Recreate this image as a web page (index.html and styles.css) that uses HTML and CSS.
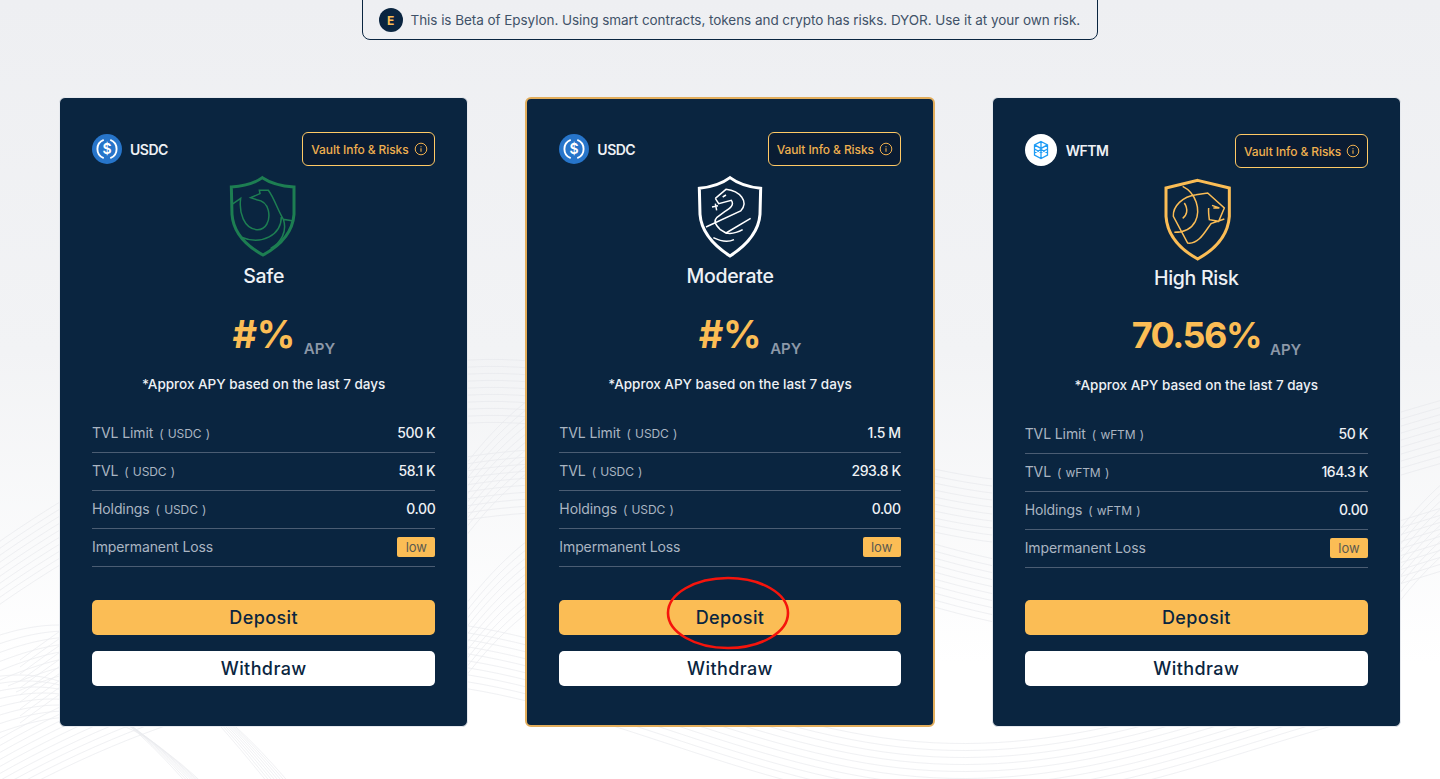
FILE: index.html
```html
<!DOCTYPE html>
<html lang="en">
<head>
<meta charset="utf-8">
<title>Epsylon Vaults</title>
<link rel="stylesheet" href="styles.css">
</head>
<body>
<svg class="waves" viewBox="0 0 1440 779" aria-hidden="true">
  <defs>
    <path id="wa" d="M-40 240 C 120 120 300 40 470 30 C 640 20 820 130 1000 150 C 1180 170 1320 100 1480 60"/>
    <path id="wb" d="M-40 60 C 30 30 90 20 150 70 C 230 130 280 220 330 260"/>
    <path id="wc" d="M440 120 C 480 60 520 20 560 0"/>
    <g id="set"><use href="#wa"/><use href="#wa" y="7"/><use href="#wa" y="14"/><use href="#wa" y="21"/><use href="#wa" y="28"/><use href="#wa" y="35"/><use href="#wa" y="42"/><use href="#wa" y="49"/><use href="#wa" y="56"/><use href="#wa" y="63"/></g>
    <g id="setb"><use href="#wb"/><use href="#wb" x="8" y="6"/><use href="#wb" x="16" y="12"/><use href="#wb" x="24" y="18"/><use href="#wb" x="32" y="24"/><use href="#wb" x="40" y="30"/><use href="#wb" x="48" y="36"/><use href="#wb" x="56" y="42"/></g>
    <g id="setc"><use href="#wc"/><use href="#wc" y="8"/><use href="#wc" y="16"/><use href="#wc" y="24"/><use href="#wc" y="32"/><use href="#wc" y="40"/><use href="#wc" y="48"/><use href="#wc" y="56"/><use href="#wc" y="64"/><use href="#wc" y="72"/></g>
  </defs>
  <use href="#set" y="330"/>
  <use href="#set" y="420" x="60"/>
  <use href="#set" y="590" x="-100"/>
  <use href="#setb" y="590"/>
  <use href="#setb" y="640" x="-40"/>
  <use href="#setc" y="380"/>
  <use href="#setc" y="520"/>
  <use href="#setc" y="450" x="930"/>
</svg>

<div class="banner-row">
  <div class="banner">
    <span class="banner-badge">E</span>
    <span>This is Beta of Epsylon. Using smart contracts, tokens and crypto has risks. DYOR. Use it at your own risk.</span>
  </div>
</div>

<main class="vaults">

  <article class="card">
    <header class="head">
      <div class="token">
        <svg class="token-icon" viewBox="0 0 32 32"><circle cx="16" cy="16" r="16" fill="#2775ca"/><path d="M12.500 6.200a10.500 10.500 0 0 0 0 19.600M19.500 6.200a10.500 10.500 0 0 1 0 19.600" fill="none" stroke="#fff" stroke-width="2"/><text x="16" y="21.500" text-anchor="middle" class="dollar">$</text></svg>
        <span class="token-name">USDC</span>
      </div>
      <button class="info-btn">Vault Info &amp; Risks
        <svg class="info-icon" viewBox="0 0 14 14"><circle cx="7" cy="7" r="5.800" fill="none" stroke="currentColor" stroke-width="1"/><path d="M7 6.300v3.400M7 4.200v1" stroke="currentColor" stroke-width="1.100"/></svg>
      </button>
    </header>
    <svg class="shield shield-safe" viewBox="0 0 240 270">
      <path class="outer" d="M115 20C95 35 62 45 22 48L24 130C28 185 68 225 117 252C166 225 206 185 210 130L210 48C170 45 137 35 115 20Z"/>
      <path class="inner" d="M24 100L50 82C44 125 60 172 98 176C125 178 140 150 133 118C128 98 115 88 98 86L80 80L108 68L106 58L133 58C150 80 160 115 178 145L208 150M50 198C115 225 172 190 172 138M178 145C190 180 172 215 140 232"/>
    </svg>
    <h2 class="level">Safe</h2>
    <div class="apy"><span></span><strong class="apy-value">#%</strong><span class="apy-label">APY</span></div>
    <p class="approx">*Approx APY based on the last 7 days</p>
    <dl class="stats">
      <div class="stat"><dt>TVL Limit<small>( USDC )</small></dt><dd>500 K</dd></div>
      <div class="stat"><dt>TVL<small>( USDC )</small></dt><dd>58.1 K</dd></div>
      <div class="stat"><dt>Holdings<small>( USDC )</small></dt><dd>0.00</dd></div>
      <div class="stat"><dt>Impermanent Loss</dt><dd class="pill">low</dd></div>
    </dl>
    <div class="actions">
      <button class="btn btn-deposit">Deposit</button>
      <button class="btn btn-withdraw">Withdraw</button>
    </div>
  </article>

  <article class="card card-active">
    <header class="head">
      <div class="token">
        <svg class="token-icon" viewBox="0 0 32 32"><circle cx="16" cy="16" r="16" fill="#2775ca"/><path d="M12.500 6.200a10.500 10.500 0 0 0 0 19.600M19.500 6.200a10.500 10.500 0 0 1 0 19.600" fill="none" stroke="#fff" stroke-width="2"/><text x="16" y="21.500" text-anchor="middle" class="dollar">$</text></svg>
        <span class="token-name">USDC</span>
      </div>
      <button class="info-btn">Vault Info &amp; Risks
        <svg class="info-icon" viewBox="0 0 14 14"><circle cx="7" cy="7" r="5.800" fill="none" stroke="currentColor" stroke-width="1"/><path d="M7 6.300v3.400M7 4.200v1" stroke="currentColor" stroke-width="1.100"/></svg>
      </button>
    </header>
    <svg class="shield shield-moderate" viewBox="0 0 240 270">
      <path class="outer" d="M120 20C100 35 68 48 28 52L30 130C34 185 74 225 120 255C166 225 206 185 210 130L212 52C172 48 140 35 120 20Z"/>
      <path class="inner" d="M76 82L108 55C150 60 178 92 152 120L48 168M76 82L86 98L124 88C134 102 120 112 104 122L80 140C70 150 76 160 90 175L108 186L182 142M84 104L66 108M76 98L80 118M98 78L108 72M108 186C128 190 140 186 158 176M70 200C90 210 115 214 132 206"/>
    </svg>
    <h2 class="level">Moderate</h2>
    <div class="apy"><span></span><strong class="apy-value">#%</strong><span class="apy-label">APY</span></div>
    <p class="approx">*Approx APY based on the last 7 days</p>
    <dl class="stats">
      <div class="stat"><dt>TVL Limit<small>( USDC )</small></dt><dd>1.5 M</dd></div>
      <div class="stat"><dt>TVL<small>( USDC )</small></dt><dd>293.8 K</dd></div>
      <div class="stat"><dt>Holdings<small>( USDC )</small></dt><dd>0.00</dd></div>
      <div class="stat"><dt>Impermanent Loss</dt><dd class="pill">low</dd></div>
    </dl>
    <div class="actions">
      <button class="btn btn-deposit">Deposit</button>
      <button class="btn btn-withdraw">Withdraw</button>
    </div>
    <svg class="annotation" viewBox="0 0 124 74"><ellipse cx="62" cy="37" rx="60" ry="35" fill="none" stroke="#f5140c" stroke-width="2.600"/></svg>
  </article>

  <article class="card card-high">
    <header class="head">
      <div class="token">
        <svg class="token-icon" viewBox="0 0 32 32"><circle cx="16" cy="16" r="16" fill="#fff"/><path d="M16 7.500l6.500 3.400v10.200L16 24.500l-6.500-3.400V10.900ZM9.500 10.900l6.500 3.500 6.500-3.500M16 7.500v17M9.500 15l6.500 3.500 6.500-3.500M9.500 19l6.500-3.500 6.500 3.500" fill="none" stroke="#1d9bf5" stroke-width="1.300"/></svg>
        <span class="token-name">WFTM</span>
      </div>
      <button class="info-btn">Vault Info &amp; Risks
        <svg class="info-icon" viewBox="0 0 14 14"><circle cx="7" cy="7" r="5.800" fill="none" stroke="currentColor" stroke-width="1"/><path d="M7 6.300v3.400M7 4.200v1" stroke="currentColor" stroke-width="1.100"/></svg>
      </button>
    </header>
    <svg class="shield shield-high" viewBox="0 0 240 270">
      <path class="outer" d="M125 22L220 45L220 130C216 190 175 230 125 258C75 230 34 190 30 130L30 45Z"/>
      <path class="inner" d="M80 40C120 60 135 110 118 145C105 170 80 178 55 178M120 65L155 60L205 105L188 145L160 140C158 125 157 115 158 105M120 65C80 70 50 100 52 130L95 210C130 215 150 170 165 152L205 138M85 90C98 110 92 128 80 136M168 97L190 105L172 105"/>
    </svg>
    <h2 class="level">High Risk</h2>
    <div class="apy"><span></span><strong class="apy-value">70.56%</strong><span class="apy-label">APY</span></div>
    <p class="approx">*Approx APY based on the last 7 days</p>
    <dl class="stats">
      <div class="stat"><dt>TVL Limit<small>( wFTM )</small></dt><dd>50 K</dd></div>
      <div class="stat"><dt>TVL<small>( wFTM )</small></dt><dd>164.3 K</dd></div>
      <div class="stat"><dt>Holdings<small>( wFTM )</small></dt><dd>0.00</dd></div>
      <div class="stat"><dt>Impermanent Loss</dt><dd class="pill">low</dd></div>
    </dl>
    <div class="actions">
      <button class="btn btn-deposit">Deposit</button>
      <button class="btn btn-withdraw">Withdraw</button>
    </div>
  </article>

</main>
</body>
</html>
```
FILE: styles.css
```css
* { box-sizing: border-box; }
html, body { margin: 0; height: 100%; }
body {
  position: relative;
  overflow: hidden;
  font-family: Inter, "Liberation Sans", sans-serif;
  background: linear-gradient(#eeeff2 0, #f2f3f5 45%, #ffffff 85%);
  color: #fff;
}
.waves {
  position: absolute;
  inset: 0;
  width: 1440px;
  height: 779px;
  fill: none;
  stroke: #e5e7eb;
  stroke-width: 0.7;
  opacity: 0.8;
}
.banner-row { position: relative; display: flex; justify-content: center; height: 40px; padding-left: 19px; }
.banner {
  width: 736px;
  display: flex;
  align-items: center;
  gap: 8px;
  margin-top: -10px;
  height: 50px;
  padding: 10px 16px 0;
  border: 1px solid #0a2540;
  border-radius: 8px;
  color: #3f5268;
  font-size: 13.5px;
  letter-spacing: -0.05px;
  white-space: nowrap;
}
.banner-badge {
  width: 24px;
  height: 24px;
  flex: none;
  border-radius: 50%;
  background: #0a2540;
  color: #fbbd55;
  font-size: 12px;
  font-weight: 700;
  display: flex;
  align-items: center;
  justify-content: center;
}
.vaults {
  position: relative;
  display: grid;
  grid-template-columns: repeat(3, 1fr);
  gap: 57px;
  padding: 57px 39px 0 59px;
}
.card {
  position: relative;
  height: 630px;
  padding: 34px 32px 0;
  background: #0a2540;
  border: 1px solid #e6e9ee;
  border-radius: 6px;
}
.card-active { border: 2px solid #e3ae5c; padding: 33px 32px 0; }
.card-high { padding-top: 36px; }
.head { display: flex; justify-content: space-between; align-items: center; height: 34px; }
.token { display: flex; align-items: center; gap: 8px; }
.card-high .token { margin-top: -2px; gap: 9px; }
.token-icon { width: 30px; height: 30px; display: block; }
.card-high .token-icon { width: 32px; height: 32px; }
.dollar { fill: #fff; font-family: Inter, sans-serif; font-size: 15px; font-weight: 600; }
.token-name { font-size: 14px; font-weight: 600; letter-spacing: -0.5px; color: #eef1f5; }
.info-btn {
  display: flex;
  align-items: center;
  gap: 5px;
  width: 133px;
  height: 34px;
  padding: 0 8px;
  background: #0a1c33;
  border: 1px solid #ffc965;
  border-radius: 6px;
  color: #f0b04f;
  font: 500 12px Inter, sans-serif;
  letter-spacing: -0.1px;
  white-space: nowrap;
}
.info-icon { width: 14px; height: 14px; flex: none; }
.shield { display: block; width: 80px; height: 90px; margin: 5px auto 0; fill: none; }
.shield .outer { stroke-width: 9; stroke-linejoin: miter; }
.shield .inner { stroke-width: 4.5; }
.shield-safe .outer, .shield-safe .inner { stroke: #1d7e52; }
.shield-moderate .outer, .shield-moderate .inner { stroke: #fff; }
.shield-high .outer, .shield-high .inner { stroke: #fbbd55; }
.level { margin: 3px 0 0; font-size: 19.5px; line-height: 24px; font-weight: 500; letter-spacing: -0.3px; text-align: center; color: #eef1f5; }
.apy {
  display: grid;
  grid-template-columns: 1fr auto 1fr;
  align-items: end;
  column-gap: 9px;
  margin-top: 24px;
  height: 44px;
}
.card-high .apy { margin-top: 23px; }
.apy-value { font-size: 38px; line-height: 44px; font-weight: 700; color: #fbbd55; letter-spacing: -0.5px; }
.card-high .apy-value { font-size: 36px; letter-spacing: -1.5px; }
.apy-label { font-size: 15px; line-height: 20px; font-weight: 600; color: #8c98a8; margin-bottom: -3px; }
.approx { margin: 18px 0 0; font-size: 13.5px; line-height: 20px; text-align: center; font-weight: 500; color: #eef1f5; }
.stats { margin: 21px 0 0; }
.stat {
  display: flex;
  justify-content: space-between;
  align-items: center;
  height: 38px;
  padding-bottom: 2px;
  border-bottom: 1px solid #4b5d73;
}
.stat dt { font-size: 14px; color: #aab5c2; letter-spacing: -0.1px; }
.stat dt small { margin-left: 6px; font-size: 12px; word-spacing: 1px; }
.stat dd { margin: 0; font-size: 14px; font-weight: 500; letter-spacing: -0.4px; color: #eef1f5; }
.stat .pill {
  height: 20px;
  width: 38px;
  display: flex;
  align-items: center;
  justify-content: center;
  border-radius: 2px;
  background: #fbbd55;
  color: #5b5a50;
  font-size: 13px;
  font-weight: 400;
  letter-spacing: 0;
}
.actions { display: flex; flex-direction: column; gap: 16px; margin-top: 33px; }
.card-high .actions { margin-top: 32px; }
.btn {
  height: 35px;
  border: 0;
  border-radius: 5px;
  font: 500 18px Inter, sans-serif;
  letter-spacing: 0.4px;
  color: #0a2540;
}
.btn-deposit { background: #fbbd55; }
.btn-withdraw { background: #fff; }
.annotation { position: absolute; left: 139px; top: 477px; width: 124px; height: 74px; }
```
